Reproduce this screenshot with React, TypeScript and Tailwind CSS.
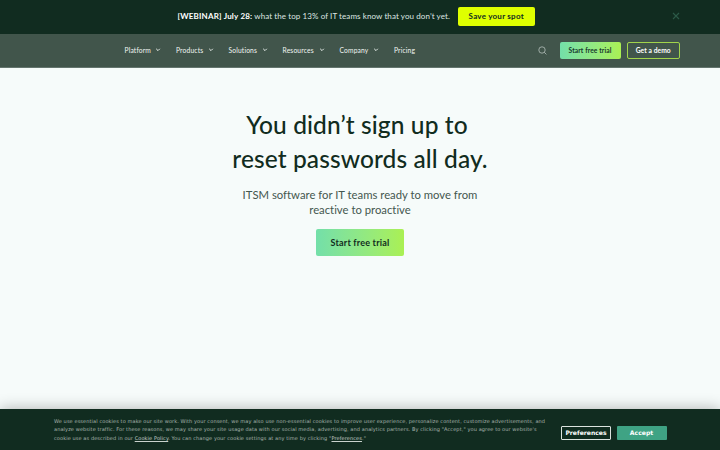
import * as React from 'react';

const navItems = [
  { label: 'Platform', width: 'w-[51.5px]', menu: true },
  { label: 'Products', width: 'w-[52.5px]', menu: true },
  { label: 'Solutions', width: 'w-[54px]', menu: true },
  { label: 'Resources', width: 'w-[57px]', menu: true },
  { label: 'Company', width: 'w-[54.5px]', menu: true },
  { label: 'Pricing', width: 'w-[24px]', menu: false },
];

const Chevron = () => (
  <svg className="mr-[15px] mt-[1px] h-[4px] w-[6px] shrink-0" viewBox="0 0 6 4" fill="none" stroke="#e8eeeb" strokeWidth="1">
    <path d="M1.2 .8 3 2.6 4.8 .8" />
  </svg>
);

const Banner = () => (
  <div className="flex h-[33.5px] shrink-0 items-center bg-[#112c20] pb-px">
    <p className="ml-[177.5px] w-[280px] whitespace-nowrap text-[8px] leading-[12px] text-[#dfe6e2]">
      <strong className="font-bold tracking-[0.19px] text-white">[WEBINAR] July 28:</strong>
      <span className="tracking-[0.09px]"> what the top 13% of IT teams know that you don’t yet.</span>
    </p>
    <button className="h-[19px] w-[77.5px] rounded-[2px] bg-[#dfff00] text-[8px] font-bold tracking-[0.24px] text-[#112c20]">
      Save your spot
    </button>
    <svg className="ml-[136.5px] h-[8px] w-[8px]" viewBox="0 0 8 8" stroke="#2c5a48" strokeWidth="1.1">
      <path d="M1 1 7 7M7 1 1 7" />
    </svg>
  </div>
);

const Header = () => (
  <header className="flex h-[34.5px] shrink-0 items-center border-b border-[#64756e] bg-[#41554b]">
    <nav className="ml-[124.5px] flex w-[413px] pb-px">
      {navItems.map((item) => (
        <a
          key={item.label}
          className={`flex shrink-0 items-center justify-between text-[6.7px] leading-[10px] tracking-[0.16px] text-[#f1f5f3] ${item.width}`}
        >
          {item.label}
          {item.menu && <Chevron />}
        </a>
      ))}
    </nav>
    <svg className="mt-[1px] h-[9px] w-[9px]" viewBox="0 0 9 9" fill="none" stroke="#c4ceca" strokeWidth="0.7">
      <circle cx="4" cy="4" r="3.2" />
      <path d="m6.3 6.3 2.1 2.1" />
    </svg>
    <button className="ml-[13px] h-[17px] w-[61px] rounded-[2px] bg-linear-to-r from-[#73dfa9] to-[#aaf052] text-[6.7px] font-bold tracking-[0.1px] text-[#17382b]">
      Start free trial
    </button>
    <button className="ml-[6px] h-[17px] w-[53.5px] rounded-[2px] border border-[#a1d44b] text-[6.7px] font-bold tracking-[0.08px] text-white">
      Get a demo
    </button>
  </header>
);

const Hero = () => (
  <main className="flex flex-1 flex-col items-center bg-[#f6fbfa] pt-[40px] text-center text-[#112c20]">
    <h1 className="whitespace-nowrap text-[24.5px] font-medium leading-[34px] tracking-[0.1px]">
      <span className="mr-[6px]">You didn’t sign up to</span>
      <br />
      reset passwords all day.
    </h1>
    <p className="mt-[11px] whitespace-nowrap text-[11.3px] leading-[15px] text-[#44574f] [font-variant-ligatures:none]">
      ITSM software for IT teams ready to move from
      <br />
      reactive to proactive
    </p>
    <button className="mt-[12px] h-[27px] w-[88px] rounded-[2px] bg-linear-to-r from-[#73dfa9] to-[#aaf052] text-[9px] font-bold tracking-[0.2px] text-[#112c20]">
      Start free trial
    </button>
  </main>
);

const CookieBar = () => (
  <footer className="flex h-[41px] shrink-0 bg-[#112c20] font-['DejaVu_Sans',sans-serif] shadow-[0_0_15px_rgba(0,0,0,0.3)]">
    <p className="ml-[54px] mt-[7.5px] w-[507px] whitespace-nowrap text-[5px] leading-[8.7px] tracking-[0.1px] text-[#a9b5af]">
      We use essential cookies to make our site work. With your consent, we may also use non-essential cookies to improve user experience, personalize content, customize advertisements, and
      <br />
      analyze website traffic. For these reasons, we may share your site usage data with our social media, advertising, and analytics partners. By clicking "Accept," you agree to our website's
      <br />
      cookie use as described in our <a className="text-[#c9d2cd] underline">Cookie Policy</a>. You can change your cookie settings at any time by clicking "<a className="text-[#c9d2cd] underline">Preferences</a>."
    </p>
    <button className="mt-[16.5px] h-[14px] w-[50px] rounded-[1px] border border-[#dce3df] text-[6.1px] font-bold text-white">
      Preferences
    </button>
    <button className="ml-[5.5px] mt-[16.5px] h-[14px] w-[50px] rounded-[1px] bg-[#3fa384] text-[6.1px] font-bold text-white">
      Accept
    </button>
  </footer>
);

const App: React.FC = () => (
  <div className="flex h-[450px] w-[720px] flex-col overflow-hidden font-['Lato',sans-serif]">
    <Banner />
    <Header />
    <Hero />
    <CookieBar />
  </div>
);

export default App;
